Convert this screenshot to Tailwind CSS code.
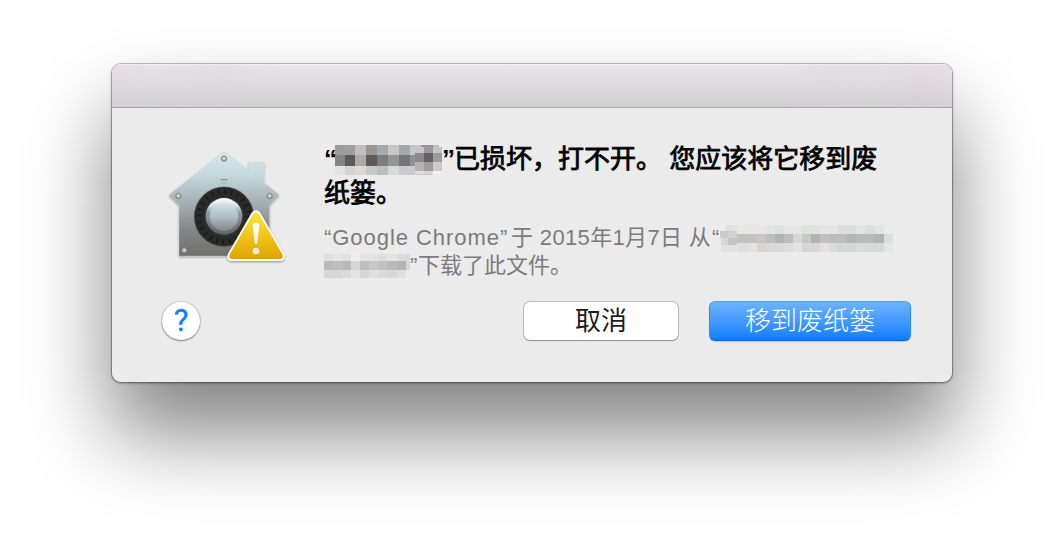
<!DOCTYPE html>
<html lang="zh-CN">
<head>
<meta charset="utf-8">
<title>Gatekeeper</title>
<script src="https://cdn.jsdelivr.net/npm/@tailwindcss/browser@4"></script>
</head>
<body class="h-[542px] overflow-hidden bg-white pl-[111px] pt-[63px] font-['Liberation_Sans','Noto_Sans_CJK_SC',sans-serif]">
<main class="flex h-[320px] w-[842px] flex-col overflow-hidden rounded-[10px] border border-[#00000038] bg-[#ebebeb] bg-clip-padding shadow-[0_50px_84px_rgba(0,0,0,0.49),0_1px_2px_rgba(0,0,0,0.22)]">
  <header class="h-[44px] shrink-0 border-b border-[#aaaaaa] bg-[linear-gradient(to_bottom,#f5f3f5_0px,#e7e4e7_2px,#dcdadc_55%,#cfcfcf_100%)]">
    <div class="h-full w-full bg-[linear-gradient(to_right,#e4cfe644_0%,#dcdcdc22_5%,#e0cfe230_11%,#d8d8d830_15%,#dcdcdc00_20%,#dcdcdc00_80%,#e0cfe238_85%,#dcdcdc30_90%,#e0cbe044_97%,#e6d8e640_100%)]"></div>
  </header>
  <section class="flex h-[193px] shrink-0">
    <svg class="ml-[43px] mt-[32px] h-[135px] w-[140px] shrink-0" viewBox="0 0 420 405">
      <defs>
        <linearGradient id="house" x1="0" y1="35" x2="0" y2="348" gradientUnits="userSpaceOnUse">
          <stop offset="0" stop-color="#d4e8ed"/><stop offset=".22" stop-color="#c6d9de"/><stop offset=".45" stop-color="#a8b5ba"/><stop offset=".75" stop-color="#858686"/><stop offset="1" stop-color="#706e6d"/>
        </linearGradient>
        <linearGradient id="knob" x1="0" y1="0" x2="0" y2="1"><stop offset="0" stop-color="#d3e6eb"/><stop offset=".5" stop-color="#afbec4"/><stop offset="1" stop-color="#828384"/></linearGradient>
        <linearGradient id="rim" x1="0" y1="0" x2="0" y2="1"><stop offset="0" stop-color="#fafcfd"/><stop offset=".2" stop-color="#dbe4e8"/><stop offset=".4" stop-color="#8f9ca2"/><stop offset="1" stop-color="#606162"/></linearGradient>
        <linearGradient id="warn" x1="0" y1="0" x2="0" y2="1"><stop offset="0" stop-color="#ffe53a"/><stop offset=".5" stop-color="#efc51d"/><stop offset="1" stop-color="#e0a400"/></linearGradient>
        <linearGradient id="mark" x1="0" y1="245" x2="0" y2="345" gradientUnits="userSpaceOnUse"><stop offset="0" stop-color="#fff"/><stop offset="1" stop-color="#eee8d8"/></linearGradient>
        <filter id="sh" x="-20%" y="-20%" width="140%" height="140%"><feDropShadow dx="0" dy="3" stdDeviation="3" flood-opacity=".4"/></filter>
      </defs>
      <path d="M207 35 L281 92 V67 H327 V128 L373 165 L343 195 V348 H72 V195 L42 165 Z" fill="url(#house)" stroke="#c6d4d8" stroke-opacity=".5" stroke-width="2" stroke-linejoin="round" filter="url(#sh)"/>
      <g fill="#a4afb2" stroke="#7c8587" stroke-width="3">
        <circle cx="207" cy="56" r="8"/><circle cx="70" cy="168" r="8"/><circle cx="344" cy="168" r="8"/><circle cx="88" cy="331" r="8"/>
      </g>
      <g fill="#d5dfe1"><circle cx="207" cy="55" r="4"/><circle cx="70" cy="167" r="4"/><circle cx="344" cy="167" r="4"/><circle cx="88" cy="330" r="4"/></g>
      <path d="M196 119 H218" stroke="#87969b" stroke-width="4"/>
      <path d="M199 124 L203 132 L207 125 L211 132 L215 124" fill="none" stroke="#9fafb4" stroke-width="2"/>
      <circle cx="207" cy="230" r="89" fill="#292929" stroke="#48494a" stroke-width="2"/>
      <circle cx="207" cy="230" r="75" fill="none" stroke="#121212" stroke-width="14" stroke-dasharray="3 16.63"/>
      <circle cx="207" cy="230" r="60" fill="#303132"/>
      <circle cx="207" cy="229" r="55" fill="url(#rim)"/>
      <circle cx="207" cy="230" r="43" fill="url(#knob)"/>
      <path d="M289 220 Q303 200 317 220 L387 341 Q395 362 374 363 H232 Q211 362 219 341 Z" fill="#fafafa" filter="url(#sh)"/>
      <path d="M293 224 Q303 209 313 224 L382 343 Q387 356 374 357 H232 Q219 356 224 343 Z" fill="url(#warn)"/>
      <path d="M293 256 Q293 248 303 248 Q313 248 313 256 L307 308 Q303 317 299 308 Z" fill="url(#mark)"/>
      <circle cx="303" cy="333" r="10" fill="url(#mark)"/>
    </svg>
    <div class="ml-[29px] mt-[34px]">
      <h1 class="text-[26px] font-normal leading-[34px] text-black [-webkit-text-stroke:0.8px_#000]">
        <span class="flex h-[34px] whitespace-pre"><span class="w-[11px] font-bold [-webkit-text-stroke:0px]">“</span><svg class="mt-[3px] h-[32px] w-[107px] shrink-0" viewBox="60 30 321 96" shape-rendering="crispEdges">
          <g><rect x="60" y="30" width="30" height="30" fill="#9b9b9b"/><rect x="90" y="30" width="30" height="30" fill="#9d9d9c"/><rect x="120" y="30" width="33" height="30" fill="#bfbfbf"/><rect x="153" y="30" width="33" height="30" fill="#9b9590"/><rect x="186" y="30" width="33" height="30" fill="#a3a9ad"/><rect x="219" y="30" width="33" height="30" fill="#c7c7c7"/><rect x="252" y="30" width="33" height="30" fill="#a5a8aa"/><rect x="285" y="30" width="33" height="30" fill="#c6c6c6"/></g>
          <g><rect x="60" y="60" width="30" height="33" fill="#848484"/><rect x="90" y="60" width="30" height="33" fill="#5b5b5b"/><rect x="120" y="60" width="33" height="33" fill="#aaaaaa"/><rect x="153" y="60" width="33" height="33" fill="#5f5a55"/><rect x="186" y="60" width="33" height="33" fill="#777d82"/><rect x="219" y="60" width="33" height="33" fill="#979593"/><rect x="252" y="60" width="33" height="33" fill="#74757a"/><rect x="285" y="60" width="33" height="33" fill="#918f8f"/></g>
          <g><rect x="60" y="93" width="30" height="27" fill="#e3e3e3"/><rect x="90" y="93" width="30" height="27" fill="#d4d4d4"/><rect x="120" y="93" width="33" height="27" fill="#dcdad8"/><rect x="153" y="93" width="33" height="27" fill="#c8c8c8"/><rect x="186" y="93" width="33" height="27" fill="#bcbfbf"/><rect x="219" y="93" width="33" height="27" fill="#dadada"/><rect x="252" y="93" width="33" height="27" fill="#cbcbcb"/><rect x="285" y="93" width="66" height="27" fill="#c9c9c9"/></g>
          <g><rect x="318" y="30" width="36" height="6" fill="#949496"/><rect x="354" y="30" width="18" height="6" fill="#c0c0c0"/><rect x="300" y="36" width="27" height="18" fill="#c6c6c6"/><rect x="327" y="36" width="27" height="18" fill="#999999"/><rect x="354" y="36" width="30" height="18" fill="#c4c4c4"/><rect x="300" y="54" width="27" height="27" fill="#8b8989"/><rect x="327" y="54" width="27" height="27" fill="#626264"/><rect x="354" y="54" width="30" height="27" fill="#9d9b9c"/><rect x="300" y="81" width="27" height="27" fill="#b5b3b4"/><rect x="327" y="81" width="27" height="27" fill="#9c9c9c"/><rect x="354" y="81" width="30" height="27" fill="#cbc9ca"/><rect x="300" y="108" width="27" height="9" fill="#dcdcdc"/><rect x="327" y="108" width="27" height="9" fill="#d4d4d4"/><rect x="354" y="108" width="30" height="9" fill="#f1f1f1"/></g>
        </svg><span class="w-[12px] font-bold [-webkit-text-stroke:0px]">”</span><span>已损坏，打不开。 您应该将它移到废</span></span>
        <span class="block">纸篓。</span>
      </h1>
      <div class="mt-[14px] text-[22px] leading-[28px] text-[#7b7b7b]">
        <p class="flex h-[28px] whitespace-pre"><span class="w-[187px] tracking-[0.95px]">“Google Chrome”</span><span class="w-[201px] tracking-[0.35px]">于 2015年1月7日 从</span><span class="w-[8px]">“</span><svg class="mt-[1px] h-[27px] w-[173px] shrink-0" viewBox="360 18 519 81" shape-rendering="crispEdges">
          <g><rect x="378" y="18" width="15" height="27" fill="#dfdfdf"/><rect x="393" y="18" width="18" height="27" fill="#e2e2e2"/><rect x="411" y="18" width="87" height="27" fill="#e6e6e6"/><rect x="498" y="18" width="27" height="27" fill="#e3e3e3"/><rect x="525" y="18" width="27" height="27" fill="#dfdfdf"/><rect x="552" y="18" width="54" height="27" fill="#e5e5e5"/><rect x="606" y="18" width="54" height="27" fill="#dfe0e0"/><rect x="660" y="18" width="54" height="27" fill="#e4e4e4"/><rect x="714" y="18" width="54" height="27" fill="#dddddd"/><rect x="768" y="18" width="27" height="27" fill="#e4e4e4"/><rect x="795" y="18" width="30" height="27" fill="#dcdddd"/><rect x="825" y="18" width="27" height="27" fill="#e4e4e4"/></g>
          <g><rect x="411" y="45" width="60" height="27" fill="#c1c1bf"/><rect x="471" y="45" width="27" height="27" fill="#c6c4c4"/><rect x="498" y="45" width="27" height="27" fill="#bebebe"/><rect x="525" y="45" width="27" height="27" fill="#b2b3b3"/><rect x="552" y="45" width="27" height="27" fill="#bebebe"/><rect x="579" y="45" width="27" height="27" fill="#d6d6d6"/><rect x="606" y="45" width="27" height="27" fill="#c8c8c6"/><rect x="633" y="45" width="27" height="27" fill="#b2b4b4"/><rect x="660" y="45" width="27" height="27" fill="#c3bebf"/><rect x="687" y="45" width="54" height="27" fill="#bdbdbd"/><rect x="741" y="45" width="27" height="27" fill="#b4b5b5"/><rect x="768" y="45" width="54" height="27" fill="#b9bbba"/><rect x="822" y="45" width="30" height="27" fill="#b3b5b5"/><rect x="852" y="45" width="27" height="27" fill="#dcdddd"/></g>
          <g><rect x="363" y="72" width="54" height="27" fill="#e2e2e2"/><rect x="417" y="72" width="27" height="27" fill="#dedede"/><rect x="444" y="72" width="27" height="27" fill="#e1e1e1"/><rect x="471" y="72" width="27" height="27" fill="#d5d4d2"/><rect x="498" y="72" width="54" height="27" fill="#d8d8d8"/><rect x="552" y="72" width="27" height="27" fill="#dddddd"/><rect x="579" y="72" width="27" height="27" fill="#e2e2e2"/><rect x="606" y="72" width="54" height="27" fill="#d7d7d7"/><rect x="660" y="72" width="27" height="27" fill="#e0e0e0"/><rect x="687" y="72" width="27" height="27" fill="#dbdbdb"/><rect x="714" y="72" width="54" height="27" fill="#d5d6d6"/><rect x="768" y="72" width="27" height="27" fill="#dadada"/><rect x="795" y="72" width="57" height="27" fill="#d7d8d8"/><rect x="852" y="72" width="27" height="27" fill="#e6e6e6"/></g>
          <g><rect x="360" y="36" width="24" height="21" fill="#cbcbcb"/><rect x="384" y="36" width="27" height="21" fill="#d0d0d0"/><rect x="363" y="57" width="21" height="21" fill="#dad4d4"/><rect x="384" y="57" width="27" height="21" fill="#c4c4c4"/></g>
        </svg></p>
        <p class="flex h-[28px] whitespace-pre"><svg class="mt-[2px] h-[24px] w-[86px] shrink-0" viewBox="27 105 258 72" shape-rendering="crispEdges">
          <g><rect x="27" y="105" width="27" height="21" fill="#e0e0e0"/><rect x="54" y="105" width="27" height="21" fill="#e5e5e5"/><rect x="81" y="105" width="27" height="21" fill="#e1e1e1"/><rect x="108" y="105" width="27" height="21" fill="#eeeeee"/><rect x="135" y="105" width="54" height="21" fill="#e4e4e4"/><rect x="189" y="105" width="27" height="21" fill="#dddddd"/><rect x="216" y="105" width="30" height="21" fill="#e4e4e4"/><rect x="246" y="105" width="27" height="21" fill="#dddddd"/><rect x="273" y="105" width="12" height="48" fill="#d8d8d8"/></g>
          <g><rect x="27" y="126" width="27" height="27" fill="#b9b9b9"/><rect x="54" y="126" width="27" height="27" fill="#bebebe"/><rect x="81" y="126" width="27" height="27" fill="#bababa"/><rect x="108" y="126" width="27" height="27" fill="#d7d7d7"/><rect x="135" y="126" width="27" height="27" fill="#bebebe"/><rect x="162" y="126" width="27" height="27" fill="#c7c7c7"/><rect x="189" y="126" width="27" height="27" fill="#c1c1c1"/><rect x="216" y="126" width="30" height="27" fill="#bababa"/><rect x="246" y="126" width="27" height="27" fill="#b5b5b5"/></g>
          <g><rect x="27" y="153" width="54" height="24" fill="#d6d6d6"/><rect x="81" y="153" width="27" height="24" fill="#dadada"/><rect x="108" y="153" width="27" height="24" fill="#e2e2e2"/><rect x="135" y="153" width="27" height="24" fill="#d5d5d5"/><rect x="162" y="153" width="27" height="24" fill="#dfdfdf"/><rect x="189" y="153" width="27" height="24" fill="#dbdbdb"/><rect x="216" y="153" width="30" height="24" fill="#d7d7d7"/><rect x="246" y="153" width="27" height="24" fill="#dfdfdf"/></g>
        </svg><span class="w-[8px]">”</span><span>下载了此文件。</span></p>
      </div>
    </div>
  </section>
  <footer class="flex items-start pl-[50px]">
    <button class="mt-px flex size-[38px] items-center justify-center rounded-full bg-white shadow-[0_0_0_1px_rgba(0,0,0,0.1),0_1px_2px_rgba(0,0,0,0.4)]" aria-label="帮助">
      <span class="font-[Roboto] text-[31px] leading-[38px] text-[#0a7fff] [-webkit-text-stroke:0.4px_#0a7fff]">?</span>
    </button>
    <button class="ml-[324px] mt-px flex h-[38px] w-[154px] items-center justify-center rounded-[6px] bg-white text-[26px] leading-none text-[#1c1c1c] shadow-[0_0_0_1px_rgba(0,0,0,0.18),0_1px_1px_rgba(0,0,0,0.25)]">取消</button>
    <button class="ml-[31px] flex h-[40px] w-[202px] items-center justify-center rounded-[6px] border border-t-[#4ea3fb] border-x-[#2c8cfa] border-b-[#0365f5] bg-linear-to-b from-[#6cb3fb] to-[#077dff] text-[26px] font-light leading-none text-white shadow-[0_1px_1px_rgba(0,0,0,0.15)]">移到废纸篓</button>
  </footer>
</main>
</body>
</html>
